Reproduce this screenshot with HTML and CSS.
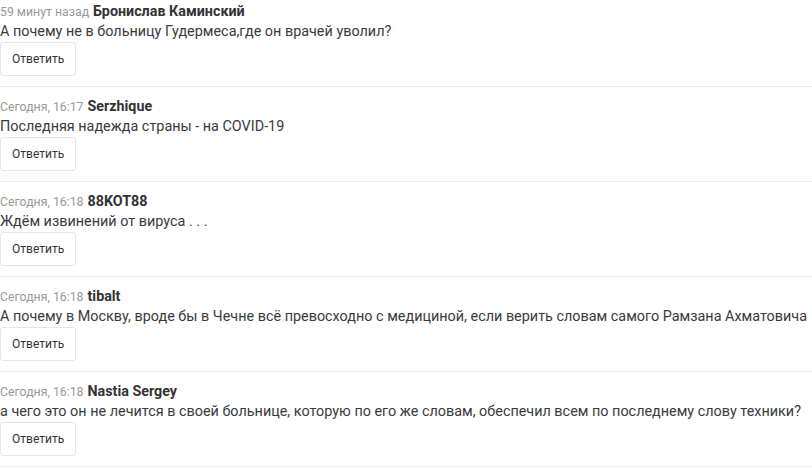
FILE: index.html
```html
<!DOCTYPE html>
<html lang="ru">
<head>
  <meta charset="UTF-8" />
  <title>Комментарии</title>
  <link rel="stylesheet" href="styles.css">
</head>
<body>
  <div class="comments">
    <div class="comment">
      <div class="comment-meta"><span class="comment-date">59 минут назад</span> <span class="comment-author">Бронислав Каминский</span></div>
      <div class="comment-text">А почему не в больницу Гудермеса,где он врачей уволил?</div>
      <button class="reply-btn">Ответить</button>
    </div>
    <div class="comment">
      <div class="comment-meta"><span class="comment-date">Сегодня, 16:17</span> <span class="comment-author">Serzhique</span></div>
      <div class="comment-text">Последняя надежда страны - на COVID-19</div>
      <button class="reply-btn">Ответить</button>
    </div>
    <div class="comment">
      <div class="comment-meta"><span class="comment-date">Сегодня, 16:18</span> <span class="comment-author">88KOT88</span></div>
      <div class="comment-text">Ждём извинений от вируса . . .</div>
      <button class="reply-btn">Ответить</button>
    </div>
    <div class="comment">
      <div class="comment-meta"><span class="comment-date">Сегодня, 16:18</span> <span class="comment-author">tibalt</span></div>
      <div class="comment-text">А почему в Москву, вроде бы в Чечне всё превосходно с медициной, если верить словам самого Рамзана Ахматовича</div>
      <button class="reply-btn">Ответить</button>
    </div>
    <div class="comment">
      <div class="comment-meta"><span class="comment-date">Сегодня, 16:18</span> <span class="comment-author">Nastia Sergey</span></div>
      <div class="comment-text">а чего это он не лечится в своей больнице, которую по его же словам, обеспечил всем по последнему слову техники?</div>
      <button class="reply-btn">Ответить</button>
    </div>
  </div>
</body>
</html>
```

FILE: styles.css
```css
body {
  margin: 0;
  background: #fff;
  font-family: Roboto, "Liberation Sans", sans-serif;
  color: #333;
}

.comment {
  padding: 10px 0 10px;
  border-bottom: 1px solid #ececec;
}

.comment:first-child {
  padding-top: 2px;
}

.comment-meta {
  display: flex;
  align-items: baseline;
  gap: 4px;
  height: 19px;
  line-height: 19px;
  font-size: 14.3px;
  overflow: hidden;
}

.comment-date {
  font-size: 12.3px;
  color: #999;
}

.comment-author {
  font-weight: bold;
  color: #333;
}

.comment-text {
  height: 21px;
  font-size: 14.4px;
  line-height: 21px;
  white-space: nowrap;
  color: #3a3a3a;
}

.reply-btn {
  display: block;
  height: 34px;
  padding: 0 11px;
  background: #fff;
  border: 1px solid #e6e6e6;
  border-radius: 3px;
  font-family: inherit;
  font-size: 12px;
  color: #333;
  cursor: pointer;
}

.reply-btn:hover {
  background: #f5f5f5;
}
```
